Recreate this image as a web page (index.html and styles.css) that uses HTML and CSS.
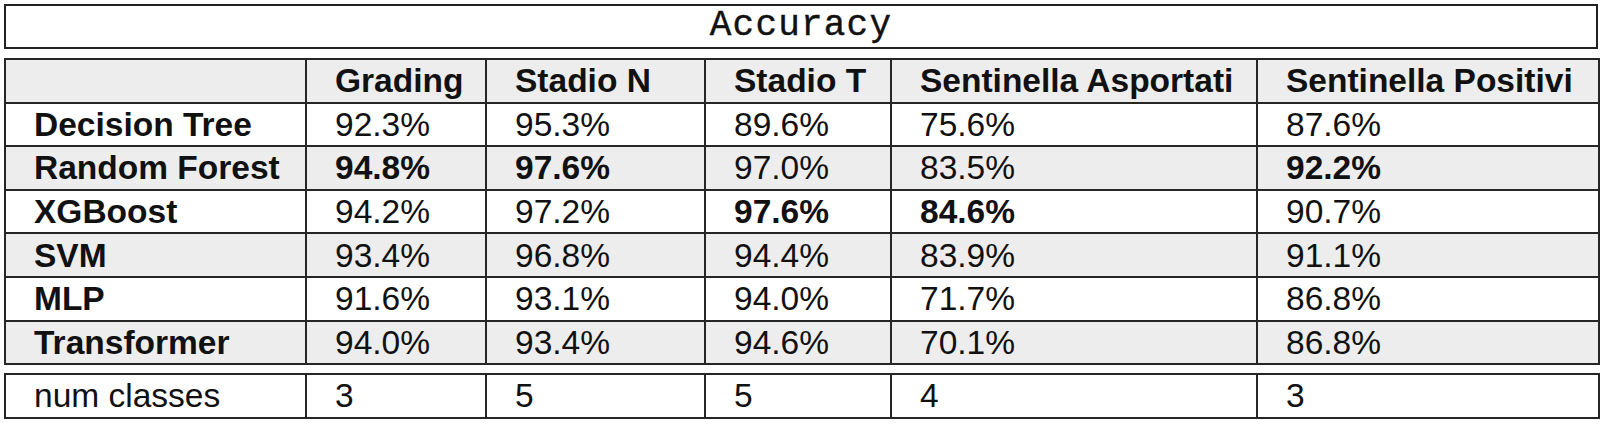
FILE: index.html
```html
<!DOCTYPE html>
<html>
<head>
<meta charset="utf-8">
<link rel="stylesheet" href="styles.css">
</head>
<body>
<div class="page">
  <div class="title">Accuracy</div>
  <table class="grid main">
    <colgroup>
      <col class="c0"><col class="c1"><col class="c2"><col class="c3"><col class="c4"><col class="c5">
    </colgroup>
    <tr class="shade head">
      <th></th><th>Grading</th><th>Stadio N</th><th>Stadio T</th><th>Sentinella Asportati</th><th>Sentinella Positivi</th>
    </tr>
    <tr>
      <th>Decision Tree</th><td>92.3%</td><td>95.3%</td><td>89.6%</td><td>75.6%</td><td>87.6%</td>
    </tr>
    <tr class="shade">
      <th>Random Forest</th><td class="best">94.8%</td><td class="best">97.6%</td><td>97.0%</td><td>83.5%</td><td class="best">92.2%</td>
    </tr>
    <tr>
      <th>XGBoost</th><td>94.2%</td><td>97.2%</td><td class="best">97.6%</td><td class="best">84.6%</td><td>90.7%</td>
    </tr>
    <tr class="shade">
      <th>SVM</th><td>93.4%</td><td>96.8%</td><td>94.4%</td><td>83.9%</td><td>91.1%</td>
    </tr>
    <tr>
      <th>MLP</th><td>91.6%</td><td>93.1%</td><td>94.0%</td><td>71.7%</td><td>86.8%</td>
    </tr>
    <tr class="shade">
      <th>Transformer</th><td>94.0%</td><td>93.4%</td><td>94.6%</td><td>70.1%</td><td>86.8%</td>
    </tr>
  </table>
  <table class="grid foot">
    <colgroup>
      <col class="c0"><col class="c1"><col class="c2"><col class="c3"><col class="c4"><col class="c5">
    </colgroup>
    <tr>
      <td>num classes</td><td>3</td><td>5</td><td>5</td><td>4</td><td>3</td>
    </tr>
  </table>
</div>
</body>
</html>
```

FILE: styles.css
```css
html, body {
  margin: 0;
  padding: 0;
  background: #ffffff;
}

.page {
  padding: 4px 0 0 4px;
  width: 1594px;
  display: flex;
  flex-direction: column;
  font-family: "Liberation Sans", Arial, sans-serif;
  color: #111111;
}

.title {
  box-sizing: border-box;
  height: 45px;
  border: 2px solid #222222;
  font-family: "Liberation Mono", "DejaVu Sans Mono", monospace;
  font-size: 36px;
  letter-spacing: 1.2px;
  line-height: 40px;
  text-align: center;
  color: #111111;
  -webkit-text-stroke: 0.4px #111111;
}

.grid {
  border-collapse: collapse;
  table-layout: fixed;
  width: 1594px;
  font-size: 33.5px;
}

.grid td,
.grid th {
  border: 2px solid #262626;
  padding: 0 0 0 28px;
  text-align: left;
  vertical-align: middle;
  white-space: nowrap;
  height: 41.6px;
  line-height: 39px;
  overflow: hidden;
}

.grid th {
  font-weight: bold;
}

.grid td {
  font-weight: normal;
}

.grid td.best {
  font-weight: bold;
}

.main {
  margin-top: 9px;
}

.foot {
  margin-top: 8px;
}

.shade {
  background: #ededed;
}

.c0 { width: 301px; }
.c1 { width: 180px; }
.c2 { width: 219px; }
.c3 { width: 186px; }
.c4 { width: 366px; }
.c5 { width: 342px; }
```
